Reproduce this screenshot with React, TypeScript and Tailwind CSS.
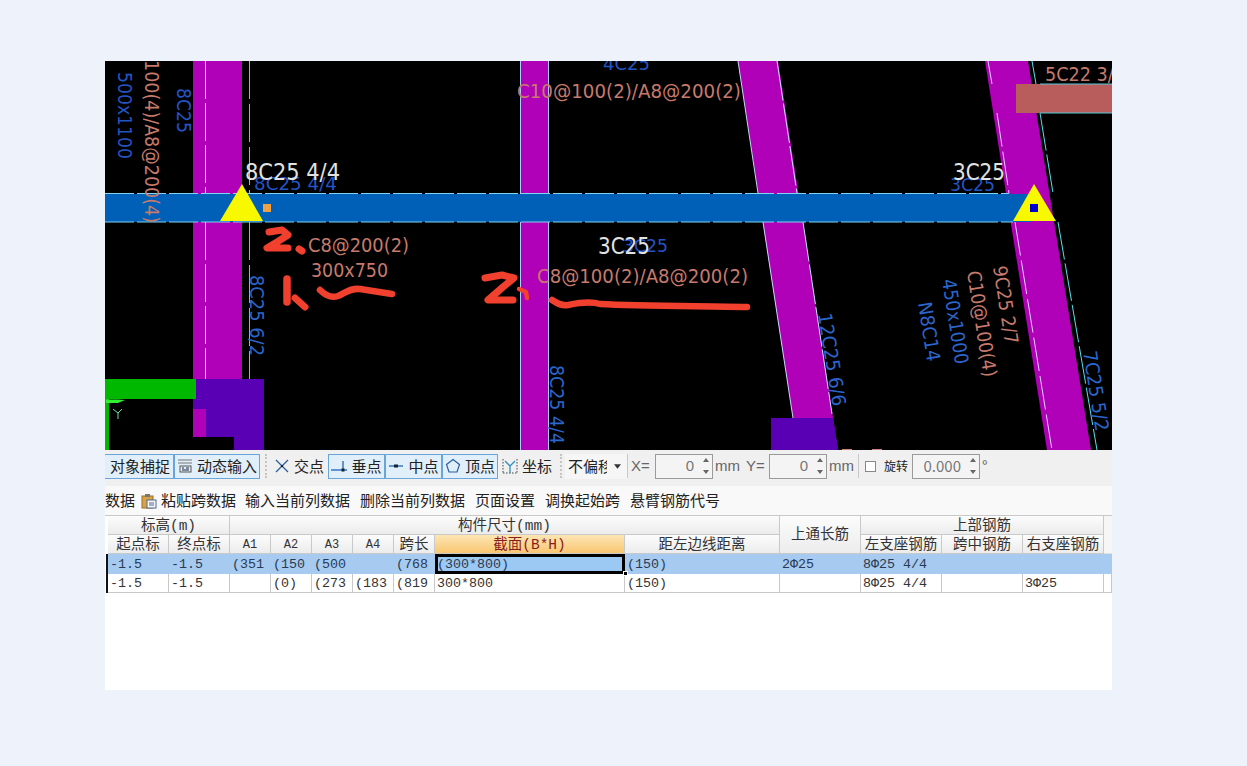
const rebar = "Φ";

function Label({ x, y, size, color, len, angle, children }: { x: number; y: number; size: number; color: string; len: number; angle?: number; children: string }) {
  return (
    <text
      x={x}
      y={y}
      fontSize={size}
      fill={color}
      textLength={len}
      lengthAdjust="spacingAndGlyphs"
      transform={angle ? `rotate(${angle} ${x} ${y})` : undefined}
    >
      {children}
    </text>
  );
}

function Drawing() {
  const blue = "#2354c4";
  const blue2 = "#2a66cc";
  const salmon = "#c67a6c";
  const white = "#e2e2e2";
  const magenta = "#b000b8";
  const purple = "#5a00b4";
  const red = "#f2402f";
  return (
    <svg viewBox="105 61 1007 389" className="block w-[1007px] h-[389px] bg-black font-['DejaVu_Sans',sans-serif]">
      {/* columns */}
      <rect x="193" y="61" width="49" height="320" fill={magenta} />
      <rect x="520" y="61" width="28" height="389" fill={magenta} />
      <polygon points="738,61 778,61 838,450 798,450" fill={magenta} />
      <polygon points="985,61 1028,61 1091,450 1047,450" fill={magenta} />

      {/* column edges */}
      <g fill="none" strokeWidth="1">
        <path d="M205.5 61V193M205.5 222V379" stroke="#f0d8ff" strokeDasharray="38 4" />
        <path d="M249.5 61V193M249.5 222V379" stroke="#4cd4e0" strokeDasharray="38 5" />
        <path d="M520.5 61V450M548.5 61V450" stroke="#a8ccff" />
        <path d="M738 61L758 193M763 222L793 418" stroke="#c8d8ff" />
        <path d="M777 61L797 193M803 222L832 414" stroke="#c8e0ff" strokeDasharray="40 3" />
        <path d="M988 61L992 84M997 113L1009 193M1015 222L1052 450" stroke="#e0d0ff" strokeDasharray="34 5" />
        <path d="M1032 61L1036 84M1040 113L1053 193M1058 222L1097 450" stroke="#58e0e8" strokeDasharray="38 4" />
      </g>

      {/* beams */}
      <rect x="105" y="194" width="927" height="28" fill="#0060b8" />
      <path d="M105 193.5H1009M105 222H1013" stroke="#7fd4f0" strokeWidth="1" strokeDasharray="29 3" />
      <rect x="1016" y="84" width="96" height="29" fill="#b85c5c" />
      <path d="M1040 84H1112M1040 113H1112" stroke="#58c8d8" strokeWidth="1" />

      {/* corner blocks */}
      <polygon points="196,379 264,379 264,450 234,450 234,437 206,437 206,409 193,409 193,399 196,399" fill={purple} />
      <rect x="193" y="409" width="13" height="28" fill={magenta} />
      <rect x="105" y="379" width="91" height="20" fill="#00b800" />
      <rect x="105" y="399" width="4" height="51" fill="#00b800" />
      <polygon points="771,418 833,418 838,450 771,450" fill={purple} />
      <path d="M106 399.5H118L125 400L118 403H106Z" fill="#30f030" />
      <path d="M118 419V413L113 409M118 413L122 409" stroke="#70e0a0" strokeWidth="1" fill="none" />
      <path d="M842 449.5H852M872 449.5H882" stroke="#d08080" strokeWidth="1" />

      {/* supports */}
      <polygon points="242,184 263,221 220,221" fill="#f8f800" />
      <polygon points="1034,184 1056,221 1013,221" fill="#f8f800" />
      <rect x="263" y="204" width="8" height="8" fill="#f0a040" />
      <rect x="1030" y="204" width="8" height="8" fill="#0000d0" />

      {/* annotations */}
      <Label x={254} y={190} size={18} color={blue} len={83}>8C25 4/4</Label>
      <Label x={245} y={180} size={23} color={white} len={95}>8C25 4/4</Label>
      <Label x={623} y={252} size={18} color={blue} len={45}>3C25</Label>
      <Label x={598} y={254} size={23} color={white} len={52}>3C25</Label>
      <Label x={950} y={191} size={18} color={blue} len={45}>3C25</Label>
      <Label x={953} y={180} size={23} color={white} len={52}>3C25</Label>
      <Label x={603} y={70} size={18} color={blue} len={47}>4C25</Label>
      <Label x={1045} y={81} size={19} color={salmon} len={80}>5C22 3/4</Label>
      <Label x={517} y={98} size={20} color={salmon} len={224}>C10@100(2)/A8@200(2)</Label>
      <Label x={308} y={252} size={20} color={salmon} len={101}>C8@200(2)</Label>
      <Label x={311} y={277} size={19} color={salmon} len={77}>300x750</Label>
      <Label x={537} y={283} size={20} color={salmon} len={211}>C8@100(2)/A8@200(2)</Label>

      <Label x={118} y={72} size={19} color={blue} len={87} angle={90}>500x1100</Label>
      <Label x={145} y={60} size={20} color={salmon} len={163} angle={90}>100(4)/A8@200(4)</Label>
      <Label x={177} y={88} size={19} color={blue} len={45} angle={90}>8C25</Label>
      <Label x={250} y={275} size={19} color={blue2} len={81} angle={90}>8C25 6/2</Label>
      <Label x={550} y={365} size={19} color={blue2} len={79} angle={90}>8C25 4/4</Label>
      <Label x={818} y={314} size={19} color={blue2} len={94} angle={81}>12C25 6/6</Label>
      <Label x={1083} y={352} size={19} color={blue2} len={81} angle={81}>7C25 5/2</Label>
      <Label x={993} y={267} size={19} color={salmon} len={79} angle={81}>9C25 2/7</Label>
      <Label x={967} y={272} size={19} color={salmon} len={107} angle={81}>C10@100(4)</Label>
      <Label x={942} y={280} size={19} color={blue2} len={86} angle={81}>450x1000</Label>
      <Label x={918} y={303} size={19} color={blue2} len={60} angle={81}>N8C14</Label>

      {/* hand marks */}
      <g fill="none" stroke={red} strokeLinecap="round" strokeLinejoin="round">
        <path d="M269 232L282 230L288 235L277 242L267 248L288 248" strokeWidth="7" />
        <path d="M299 249L302 251" strokeWidth="7" />
        <path d="M287 279V302" strokeWidth="7.5" />
        <path d="M295 298L305 307" strokeWidth="7" />
        <path d="M320 290C326 296 332 298 338 296C345 293 350 288 360 289L392 294" strokeWidth="6.5" />
        <path d="M485 278L502 275L514 278L503 287L488 300L513 300" strokeWidth="7" />
        <path d="M519 289L526 292L527 298" strokeWidth="4.5" />
        <path d="M552 300C558 304 562 306 568 305C578 303 590 301 600 304C640 306 700 306 747 307" strokeWidth="6.5" />
      </g>
    </svg>
  );
}

function Spinner() {
  return (
    <svg viewBox="0 0 10 22" className="w-[10px] h-[22px]">
      <path d="M5 3L8 7H2Z" fill="#666" />
      <path d="M5 19L8 15H2Z" fill="#666" />
    </svg>
  );
}

function NumberBox({ value, width }: { value: string; width: string }) {
  return (
    <div className={`flex items-center justify-end h-[25px] ${width} border border-[#9a9a9a] bg-[#f4f4f4] text-[#777] pr-[1px]`}>
      <span className="mr-[7px]">{value}</span>
      <Spinner />
    </div>
  );
}

function ToolButton({ label, active, width, icon }: { label: string; active?: boolean; width: string; icon: React.ReactNode }) {
  return (
    <div className={`flex items-center justify-center gap-[4px] h-[25px] shrink-0 ${width} ${active ? "border border-[#69a5d8] bg-[#e0effa]" : ""}`}>
      {icon}
      <span>{label}</span>
    </div>
  );
}

function Sep() {
  return <div className="h-[24px] w-0 border-l-2 border-dotted border-[#c4c4c4] shrink-0" />;
}

const iconClass = "w-[16px] h-[16px] shrink-0";

const crossIcon = (
  <svg viewBox="0 0 16 16" className={iconClass}>
    <path d="M2 2L14 14M14 2L2 14" stroke="#2a5f9e" strokeWidth="1.3" />
    <rect x="7" y="7" width="2" height="2" fill="#123" />
  </svg>
);
const perpIcon = (
  <svg viewBox="0 0 16 16" className={iconClass}>
    <path d="M0 12H16" stroke="#2a6fbe" strokeWidth="1.4" />
    <path d="M12 3V12" stroke="#2a6fbe" strokeWidth="1.4" />
    <rect x="10.5" y="10.5" width="3" height="3" fill="#123" />
  </svg>
);
const midIcon = (
  <svg viewBox="0 0 16 16" className={iconClass}>
    <path d="M1 8H15" stroke="#2a6fbe" strokeWidth="1.4" />
    <rect x="6" y="6.5" width="4" height="3" fill="#123" />
  </svg>
);
const vertexIcon = (
  <svg viewBox="0 0 16 16" className={iconClass}>
    <path d="M8 1.5L14.5 6.5L12 14H4L1.5 6.5Z" fill="none" stroke="#2a5f9e" strokeWidth="1.2" />
  </svg>
);
const coordIcon = (
  <svg viewBox="0 0 16 16" className={iconClass}>
    <path d="M1 1V15M15 1V15M1 15H15" stroke="#444" strokeWidth="1" strokeDasharray="1.5 1.5" fill="none" />
    <path d="M8 15V8L3 3M8 8L13 3" stroke="#2a8fbe" strokeWidth="1.3" fill="none" />
  </svg>
);
const inputIcon = (
  <svg viewBox="0 0 16 16" className={iconClass}>
    <path d="M1 2H15M1 5H15" stroke="#777" strokeWidth="1" />
    <rect x="3" y="8" width="11" height="6" fill="none" stroke="#555" strokeWidth="1" />
    <path d="M5 10H7M9 10H12M5 12H12" stroke="#224" strokeWidth="1" />
  </svg>
);
const pasteIcon = (
  <svg viewBox="0 0 16 16" className={iconClass}>
    <rect x="1" y="3" width="11" height="12" fill="#d8a24a" stroke="#9a6c20" />
    <rect x="4" y="1" width="5" height="3" fill="#777" />
    <rect x="6" y="7" width="9" height="8" fill="#f6f6f6" stroke="#4a6a9a" />
    <path d="M8 10H13M8 12H13" stroke="#4a6a9a" />
  </svg>
);

function Toolbar() {
  return (
    <div className="flex items-center h-[36px] bg-[#f0f0f0] text-[15px] text-[#222] pb-[8px] pt-[4px] overflow-hidden">
      <div className="flex items-center h-[25px] w-[69px] pl-[5px] shrink-0 border-y border-r border-[#69a5d8] bg-[#e0effa]">对象捕捉</div>
      <ToolButton label="动态输入" active width="w-[86px]" icon={inputIcon} />
      <div className="w-[12px] flex justify-center shrink-0"><Sep /></div>
      <ToolButton label="交点" width="w-[54px]" icon={crossIcon} />
      <div className="w-[2px] shrink-0" />
      <ToolButton label="垂点" active width="w-[57px]" icon={perpIcon} />
      <ToolButton label="中点" active width="w-[57px]" icon={midIcon} />
      <ToolButton label="顶点" active width="w-[56px]" icon={vertexIcon} />
      <ToolButton label="坐标" width="w-[58px]" icon={coordIcon} />
      <div className="w-[9px] flex justify-center shrink-0"><Sep /></div>
      <div className="flex items-center h-[25px] w-[62px] pl-[3px] bg-[#f6f6f6] shrink-0">
        <span className="w-[39px] overflow-hidden whitespace-nowrap">不偏移</span>
        <svg viewBox="0 0 8 5" className="w-[7px] h-[5px] ml-[7px]"><path d="M0 0H8L4 5Z" fill="#333" /></svg>
      </div>
      <div className="h-[24px] border-l border-[#c8c8c8] shrink-0" />
      <div className="flex items-center text-[#666] font-['Liberation_Sans',sans-serif] shrink-0">
        <span className="ml-[3px] w-[24px]">X=</span>
        <NumberBox value="0" width="w-[58px]" />
        <span className="ml-[2px] w-[31px]">mm</span>
        <span className="w-[23px]">Y=</span>
        <NumberBox value="0" width="w-[58px]" />
        <span className="ml-[2px] w-[29px]">mm</span>
      </div>
      <div className="h-[24px] border-l border-[#c8c8c8] shrink-0" />
      <div className="ml-[6px] w-[11px] h-[11px] border border-[#888] bg-white shrink-0" />
      <span className="ml-[8px] w-[28px] text-[12px] shrink-0">旋转</span>
      <NumberBox value="0.000" width="w-[68px]" />
      <span className="ml-[2px] text-[#666]">°</span>
    </div>
  );
}

function ActionBar() {
  return (
    <div className="flex items-center gap-[10px] h-[29px] bg-[#f9f9f9] text-[15px] text-[#222] whitespace-nowrap">
      <span className="w-[30px] overflow-hidden">数据</span>
      <div className="flex items-center gap-[4px] ml-[-4px]">
        {pasteIcon}
        <span>粘贴跨数据</span>
      </div>
      <span className="ml-[-1px]">输入当前列数据</span>
      <span>删除当前列数据</span>
      <span>页面设置</span>
      <span>调换起始跨</span>
      <span>悬臂钢筋代号</span>
    </div>
  );
}

const headCell = "flex items-center justify-center pt-[2px] border-r border-b border-[#c9c9c9] bg-gradient-to-b from-[#fcfcfc] to-[#ececec] text-[14.5px] text-[#333] whitespace-nowrap overflow-hidden";

function RowCell({ text, selected, lead }: { text?: string; selected?: boolean; lead?: boolean }) {
  return (
    <div className={`flex items-center pl-[2px] pt-[2px] border-r border-b whitespace-nowrap ${lead ? "shadow-[-2px_0_0_#111]" : ""} ${selected ? "bg-[#a6caf0] border-[#a6caf0] text-[#2a3a52]" : "bg-white border-[#c9c9c9] text-[#333]"}`}>
      {text}
    </div>
  );
}

function Table() {
  const rowA = ["-1.5", "-1.5", "(351", "(150", "(500", "", "(768"];
  const rowA2 = ["(150)", `2${rebar}25`, `8${rebar}25 4/4`, "", "", ""];
  const rowB = ["-1.5", "-1.5", "", "(0)", "(273", "(183", "(819", "300*800", "(150)", "", `8${rebar}25 4/4`, "", `3${rebar}25`, ""];
  return (
    <div className="bg-white flex-1 pl-[3px] border-t border-[#c9c9c9]">
      <div className="grid grid-cols-[61px_61px_41px_41px_41px_41px_41px_190px_155px_81px_81px_81px_81px_8px] grid-rows-[19px_19px_20px_19px] text-[13.33px] leading-none font-['Liberation_Mono','Noto_Sans_CJK_SC',monospace]">
        <div className={`${headCell} col-span-2`}>标高(m)</div>
        <div className={`${headCell} col-span-7`}>构件尺寸(mm)</div>
        <div className={`${headCell} row-span-2`}>上通长筋</div>
        <div className={`${headCell} col-span-3`}>上部钢筋</div>
        <div className="bg-[#f6f6f6] border-b border-[#e0e0e0] row-span-2" />

        <div className={headCell}>起点标</div>
        <div className={headCell}>终点标</div>
        {["A1", "A2", "A3", "A4"].map((a) => (
          <div key={a} className={`${headCell} !text-[12px]`}>{a}</div>
        ))}
        <div className={headCell}>跨长</div>
        <div className="flex items-center justify-center pt-[2px] border-r border-b border-[#c9c9c9] bg-gradient-to-b from-[#fde6b4] to-[#f8c670] text-[14.5px] text-[#8a1c1c]">截面(B*H)</div>
        <div className={headCell}>距左边线距离</div>
        <div className={headCell}>左支座钢筋</div>
        <div className={headCell}>跨中钢筋</div>
        <div className={headCell}>右支座钢筋</div>

        {rowA.map((t, i) => (
          <RowCell key={i} text={t} selected lead={i === 0} />
        ))}
        <div className="relative flex items-center pl-[2px] pt-[2px] bg-[#9cc8f4] text-[#2a3a52]">
          (300*800)
          <div className="absolute inset-0 border-[3px] border-black" />
          <div className="absolute right-[-3px] bottom-[-2px] w-[5px] h-[5px] bg-black border border-white" />
        </div>
        {rowA2.map((t, i) => (
          <RowCell key={i} text={t} selected />
        ))}

        {rowB.map((t, i) => (
          <RowCell key={i} text={t} lead={i === 0} />
        ))}
      </div>
    </div>
  );
}

export default function App() {
  return (
    <div className="h-[766px] overflow-hidden bg-[#eef3fb] pt-[61px] pl-[105px] font-['Noto_Sans_CJK_SC','Liberation_Sans',sans-serif]">
      <div className="flex flex-col w-[1007px] h-[629px]">
        <Drawing />
        <Toolbar />
        <ActionBar />
        <Table />
      </div>
    </div>
  );
}
